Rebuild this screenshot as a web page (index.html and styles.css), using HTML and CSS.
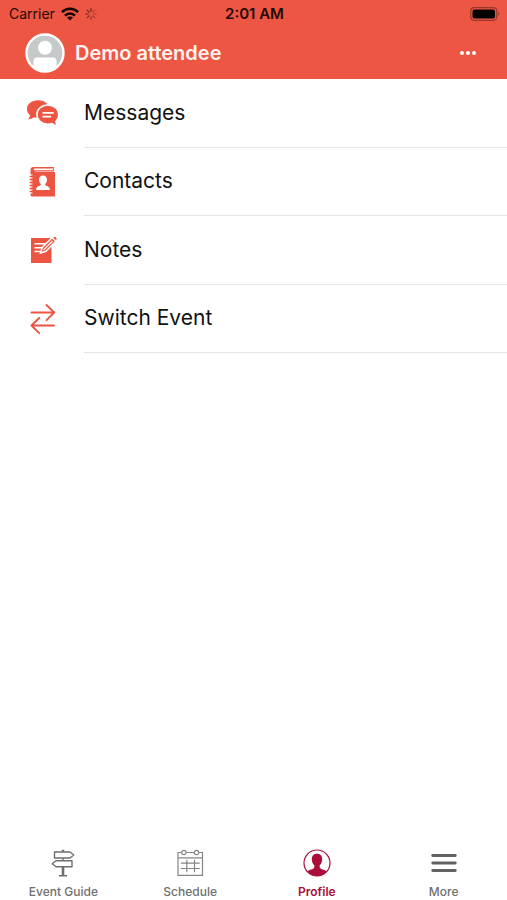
FILE: index.html
```html
<!DOCTYPE html>
<html lang="en">
<head>
<meta charset="utf-8">
<meta name="viewport" content="width=device-width, initial-scale=1">
<title>Profile</title>
<link rel="stylesheet" href="styles.css">
</head>
<body>
<header class="top">
  <div class="status">
    <div class="status-left">
      <span>Carrier</span>
      <svg class="wifi" width="18" height="14" viewBox="0 0 18 14" fill="none" stroke="#160503" stroke-width="2.6" aria-hidden="true">
        <path d="M.9 5.2C5.4.6 12.600.6 17.100 5.200"/>
        <path d="M4 8.600c2.900-2.900 7.100-2.900 10 0"/>
        <path d="M9 13.600 6 10.600c1.700-1.600 4.300-1.600 6 0z" fill="#160503" stroke="none"/>
      </svg>
      <svg class="spinner" width="12" height="12" viewBox="0 0 12 12" stroke="#4a1a12" stroke-width="1.100" stroke-linecap="round" aria-hidden="true">
        <path d="M6 .7v2.600" opacity=".9"/><path d="m9.700 2.300-1.800 1.800" opacity=".35"/><path d="M11.300 6H8.700" opacity=".4"/><path d="M9.700 9.700 7.900 7.900" opacity=".5"/><path d="M6 11.300V8.700" opacity=".6"/><path d="m2.300 9.700 1.800-1.800" opacity=".7"/><path d="M.7 6h2.600" opacity=".8"/><path d="m2.300 2.300 1.800 1.800" opacity=".9"/>
      </svg>
    </div>
    <time class="clock">2:01 AM</time>
    <svg class="battery" width="30" height="14" viewBox="0 0 30 14" aria-hidden="true">
      <rect x=".7" y=".7" width="26" height="12.600" rx="3.500" fill="none" stroke="#97382b" stroke-width="1.200"/>
      <rect x="2.500" y="2.500" width="22.500" height="9" rx="2" fill="#000"/>
      <path d="M28.300 5c1.500.5 1.500 3.500 0 4z" fill="#97382b"/>
    </svg>
  </div>
  <div class="bar">
    <svg class="avatar" width="40" height="40" viewBox="0 0 40 40" aria-hidden="true">
      <circle cx="20" cy="20" r="18.500" fill="#c6c9ca" stroke="#fff" stroke-width="2.400"/>
      <circle cx="20" cy="14.800" r="7" fill="#fff"/>
      <path d="M8.500 35v-6.500q0-4 4-4h15q4 0 4 4V35Q26 39 20 39T8.500 35z" fill="#fff"/>
    </svg>
    <h1 class="name">Demo attendee</h1>
    <button class="options" type="button" aria-label="Options">
      <svg width="16" height="4" viewBox="0 0 16 4" fill="#fff" aria-hidden="true"><circle cx="2" cy="2" r="2"/><circle cx="8" cy="2" r="2"/><circle cx="14" cy="2" r="2"/></svg>
    </button>
  </div>
</header>
<main class="content">
  <ul class="list">
    <li><a class="row" href="#messages">
      <svg class="row-icon" width="32" height="32" viewBox="1 0 30 30" aria-hidden="true">
        <path d="M11.500 3C5.500 3 1 6.500 1 11.300c0 2.500 1.200 4.400 2.800 5.800-.2 1.700-.9 2.700-1.900 3.700 2.400-.1 4.300-.8 5.700-1.900 1.300.4 2.500.5 4 .5 6 0 10.400-3.600 10.400-8.100S17.500 3 11.500 3z" fill="#ec5542"/>
        <path d="M20.500 7.500c-5.800 0-10.200 3.900-10.200 9s4.400 9 10.200 9c1.400 0 2.700-.2 3.900-.6 1.500 1.400 3.300 2.200 5.600 2.200-1-1-1.700-2.400-1.900-4 1.600-1.600 2.700-3.900 2.700-6.500 0-5.200-4.500-9.100-10.300-9.100z" fill="#ec5542" stroke="#fff" stroke-width="1.500"/>
        <path d="M15.500 14.800h10.500M15.500 18.400h8" stroke="#fff" stroke-width="1.600"/>
      </svg>
      <span class="label">Messages</span></a></li>
    <li><a class="row" href="#contacts">
      <svg class="row-icon" width="32" height="32" viewBox="0 0 32 32" aria-hidden="true">
        <path d="M6.500 1H27v1.500H7.200q-1 .8 0 1.700H27v1.300H7.500q1 .5 2 .5H28v24.500H5q-1.500 0-1.500-2V4q0-3 3-3z" fill="#ec5542"/>
        <path d="M26.500 2.500v2" stroke="#ec5542"/>
        <path d="M2.500 9h3M2.500 12h3M2.500 15h3M2.500 18h3M2.500 21h3M2.500 24h3M2.500 27h3" stroke="#fff" stroke-width="1"/>
        <path d="M2.500 10.500h2M2.500 13.500h2M2.500 16.500h2M2.500 19.500h2M2.500 22.500h2M2.500 25.500h2" stroke="#ec5542" stroke-width="1"/>
        <path d="M16 9.500c2.600 0 4 1.700 4 4.300 0 1.900-.8 3.500-1.900 4.400 0 2.300 4.900 1.300 4.900 5.800H9c0-4.500 4.900-3.500 4.900-5.800-1.100-.9-1.900-2.500-1.900-4.400 0-2.600 1.400-4.300 4-4.300z" fill="#fff"/>
      </svg>
      <span class="label">Contacts</span></a></li>
    <li><a class="row" href="#notes">
      <svg class="row-icon" width="32" height="32" viewBox="1 0 32 32" aria-hidden="true">
        <path d="M5 4h20.500v25H5z" fill="#ec5542"/>
        <path d="M8.500 9.800h10.500M8.500 13.700h8.500M8.500 17.500h6" stroke="#fff" stroke-width="1.600"/>
        <path d="m14.500 19 1.700-5.500L26.500 3.200l3.800 3.600-10.400 10.500z" fill="#ec5542" stroke="#fff" stroke-width="1.500"/>
        <path d="m17.500 16 9-9M26 3.700l3.600 3.500" stroke="#fff" stroke-width="1.100"/>
        <path d="m27.200 3.700.8-.8q.7-.5 1.300.1l1.100 1.100q.5.700-.1 1.300l-.7.700z" fill="#ec5542"/>
      </svg>
      <span class="label">Notes</span></a></li>
    <li><a class="row" href="#switch-event">
      <svg class="row-icon" width="32" height="32" viewBox="0 1 32 32" fill="none" stroke="#ec5542" stroke-width="1.900" stroke-linecap="round" stroke-linejoin="round" aria-hidden="true">
        <path d="M4.500 10.500H27M19.500 3 27.200 10.500 19.500 18.200"/><path d="M27 23.500H4.500M12.200 16 4.500 23.500l7.700 7.700"/>
      </svg>
      <span class="label">Switch Event</span></a></li>
  </ul>
</main>
<nav class="tabs" aria-label="Main">
  <a class="tab" href="#guide">
    <svg width="28" height="28" viewBox="0 0 28 28" fill="none" stroke="#6e6e6e" stroke-width="1.400" stroke-linejoin="round" aria-hidden="true">
      <path d="M5.500 3H21l3.800 3L21 9H5.500zM23 11.700H7L3.200 14.700 7 17.700h16z"/><path d="M14 1v2M14 9v2.700M10 26.800h8"/><path d="M14 17.700V27" stroke-width="2.600"/><path d="M14 .8v1.500" stroke-width="2.600"/>
    </svg>
    <span>Event Guide</span></a>
  <a class="tab" href="#schedule">
    <svg width="28" height="28" viewBox="0 0 28 28" fill="none" stroke="#858585" stroke-width="1.200" aria-hidden="true">
      <path d="M5.500 3.500H2v22.800h24.500V3.500h-3.700M10.200 3.500h8M2 8.800h24.500"/><circle cx="7.900" cy="3.500" r="2.200"/><circle cx="20.500" cy="3.500" r="2.200"/><path d="M4.800 14.200h19M4.800 19.500h19M10.800 10.800v12.500M18.500 10.800v12.500"/>
    </svg>
    <span>Schedule</span></a>
  <a class="tab active" href="#profile" aria-current="page">
    <svg width="28" height="28" viewBox="0 0 28 28" aria-hidden="true">
      <circle cx="14" cy="14" r="13" fill="#fff" stroke="#a90e3b" stroke-width="1.200"/>
      <path d="M14 4.800c3.300 0 5.200 2.200 5.200 5.500 0 2.600-1 4.700-2.500 6v2c0 2.300 5.300 2.200 7.100 4.200C21.500 25.200 18 27 14 27s-7.500-1.800-9.800-4.500c1.800-2 7.100-1.900 7.100-4.200v-2c-1.500-1.300-2.500-3.400-2.500-6 0-3.300 1.900-5.500 5.200-5.500z" fill="#a90e3b"/>
    </svg>
    <span>Profile</span></a>
  <a class="tab" href="#more">
    <svg width="28" height="28" viewBox="0 0 28 28" stroke="#626262" stroke-width="2.800" stroke-linecap="round" aria-hidden="true"><path d="M2.700 6.500h22.600M2.700 14h22.600M2.700 21.500h22.600"/></svg>
    <span>More</span></a>
</nav>
</body>
</html>
```
FILE: styles.css
```css
* {
  box-sizing: border-box;
}

body {
  margin: 0;
  min-height: 100vh;
  display: flex;
  flex-direction: column;
  background: #fff;
  color: #111;
  font-family: Inter, "Liberation Sans", sans-serif;
}

a {
  color: inherit;
  text-decoration: none;
}

svg {
  display: block;
  flex: none;
}

.top {
  background: #ed5643;
}

.status {
  display: grid;
  grid-template-columns: 1fr auto 1fr;
  align-items: center;
  height: 27px;
  padding: 0 7px 0 9px;
  font-size: 14px;
  line-height: 20px;
  color: #230a07;
}

.status-left {
  display: flex;
  align-items: center;
  gap: 6px;
}

.clock {
  font-size: 15px;
  font-weight: 600;
}

.battery {
  justify-self: end;
}

.bar {
  display: flex;
  align-items: center;
  gap: 10px;
  height: 52px;
  padding: 0 23px 1px 25px;
}

.name {
  flex: 1;
  margin: 0;
  font-size: 20px;
  line-height: 28px;
  font-weight: 600;
  color: #fff2ee;
}

.options {
  padding: 8px;
  border: 0;
  background: none;
}

.content {
  flex: 1;
}

.list {
  display: grid;
  grid-auto-rows: 1fr;
  min-height: 274px;
  margin: 0;
  padding: 0;
  list-style: none;
}

.row {
  display: flex;
  gap: 25px;
  height: 100%;
  padding-left: 27px;
}

.row-icon {
  align-self: center;
}

.label {
  flex: 1;
  display: flex;
  align-items: center;
  border-bottom: 1px solid #e4e4e4;
  font-size: 21px;
  line-height: 28px;
}

.tabs {
  display: grid;
  grid-template-columns: repeat(4, 1fr);
}

.tab {
  display: flex;
  flex-direction: column;
  align-items: center;
  gap: 7px;
  font-size: 12px;
  line-height: 16px;
  font-weight: 500;
  color: #6f6f6f;
}

.active {
  color: #a90e3b;
  font-weight: 600;
}
```
